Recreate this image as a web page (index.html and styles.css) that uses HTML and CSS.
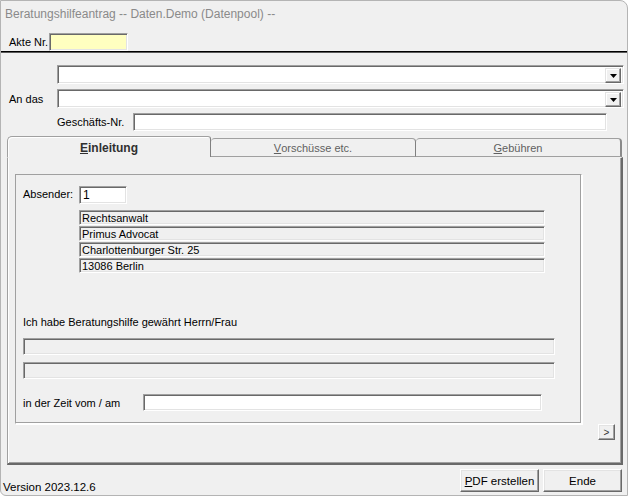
FILE: index.html
```html
<!DOCTYPE html>
<html lang="de">
<head>
  <meta charset="UTF-8">
  <title>Beratungshilfeantrag</title>
  <link rel="stylesheet" href="styles.css">
</head>
<body>

  <div class="window">
    <div class="titlebar">Beratungshilfeantrag -- Daten.Demo (Datenpool) --</div>

    <div class="akte-row">
      <span class="akte-label">Akte Nr.</span>
      <span class="field akte-field"></span>
    </div>

    <div class="address">
      <div class="addr-row">
        <span class="addr-label"></span>
        <div class="combo">
          <span class="combo-btn">
            <svg width="7" height="4" viewBox="0 0 7 4"><path d="M0 0h7L3.5 4z" fill="#000"/></svg>
          </span>
        </div>
      </div>
      <div class="addr-row">
        <span class="addr-label">An das</span>
        <div class="combo">
          <span class="combo-btn">
            <svg width="7" height="4" viewBox="0 0 7 4"><path d="M0 0h7L3.5 4z" fill="#000"/></svg>
          </span>
        </div>
      </div>
      <div class="gnr-row">
        <span class="gnr-label">Geschäfts-Nr.</span>
        <span class="field gnr-field"></span>
      </div>
    </div>

    <div class="tabs">
      <div class="tab tab-active"><u>E</u>inleitung</div>
      <div class="tab tab-mid"><u>V</u>orschüsse etc.</div>
      <div class="tab tab-last"><u>G</u>ebühren</div>
    </div>

    <div class="panel">
      <div class="group">
        <div class="sender-row">
          <span class="sender-label">Absender:</span>
          <span class="field sender-field">1</span>
        </div>
        <div class="sender-lines">
          <div class="field ro-line">Rechtsanwalt</div>
          <div class="field ro-line">Primus Advocat</div>
          <div class="field ro-line">Charlottenburger Str. 25</div>
          <div class="field ro-line">13086 Berlin</div>
        </div>

        <div class="granted">Ich habe Beratungshilfe gewährt Herrn/Frau</div>
        <div class="field off-line"></div>
        <div class="field off-line"></div>

        <div class="period-row">
          <span class="period-label">in der Zeit vom / am</span>
          <span class="field period-field"></span>
        </div>
      </div>
      <div class="next-row">
        <span class="btn small-btn">&gt;</span>
      </div>
    </div>

    <div class="bottom">
      <span class="version">Version 2023.12.6</span>
      <div class="buttons">
        <span class="btn big-btn"><u>P</u>DF erstellen</span>
        <span class="btn big-btn">Ende</span>
      </div>
    </div>
  </div>

</body>
</html>
```

FILE: styles.css
```css
body {
  margin: 0;
  background-color: #ffffff;
  font-family: "Liberation Sans", Arial, sans-serif;
  font-size: 11px;
  color: #000000;
}

.window {
  box-sizing: border-box;
  width: 628px;
  height: 496px;
  background-color: #f0f0f0;
  border: 1px solid #b4b4b4;
  border-top-right-radius: 8px;
  border-bottom-left-radius: 6px;
  overflow: hidden;
}

.titlebar {
  height: 31px;
  line-height: 27px;
  padding-left: 4px;
  font-size: 12px;
  color: #8a8a8a;
}

/* sunken 3D edit field */
.field {
  box-sizing: border-box;
  display: block;
  background-color: #ffffff;
  border: 1px solid;
  border-color: #a0a0a0 #ffffff #ffffff #a0a0a0;
  box-shadow: inset 1px 1px 0 #696969, inset -1px -1px 0 #e3e3e3;
}

/* raised 3D button */
.btn {
  box-sizing: border-box;
  display: flex;
  align-items: center;
  justify-content: center;
  background-color: #f0f0f0;
  border: 1px solid;
  border-color: #ffffff #696969 #696969 #ffffff;
  box-shadow: inset -1px -1px 0 #a0a0a0, inset 1px 1px 0 #e3e3e3;
}

.akte-row {
  display: flex;
  align-items: center;
  height: 19px;
  padding-left: 8px;
  border-bottom: 1px solid #000000;
  box-shadow: 0 1px 0 #5a5a5a;
  margin-bottom: 1px;
}

.akte-label {
  width: 40px;
}

.akte-field {
  width: 79px;
  height: 18px;
  background-color: #ffffc0;
  margin-top: 1px;
}

.address {
  padding: 12px 0 0 8px;
}

.addr-row {
  display: flex;
  align-items: center;
  margin-bottom: 5px;
}

.addr-label {
  width: 48px;
}

.combo {
  box-sizing: border-box;
  width: 567px;
  height: 19px;
  background-color: #ffffff;
  border: 1px solid;
  border-color: #a0a0a0 #ffffff #ffffff #a0a0a0;
  box-shadow: inset 1px 1px 0 #696969, inset -1px -1px 0 #e3e3e3;
  display: flex;
  justify-content: flex-end;
  padding: 2px;
}

.combo-btn {
  box-sizing: border-box;
  width: 16px;
  height: 15px;
  display: flex;
  align-items: center;
  justify-content: center;
  background-color: #f0f0f0;
  border: 1px solid;
  border-color: #e3e3e3 #696969 #696969 #e3e3e3;
  box-shadow: inset -1px -1px 0 #a0a0a0, inset 1px 1px 0 #ffffff;
}

.gnr-row {
  display: flex;
  align-items: center;
  padding-left: 48px;
}

.gnr-label {
  width: 76px;
}

.gnr-field {
  width: 474px;
  height: 18px;
}

/* tabs */
.tabs {
  display: flex;
  margin: 5px 0 0 6px;
  height: 21px;
}

.tab {
  box-sizing: border-box;
  display: flex;
  align-items: center;
  justify-content: center;
  color: #606060;
}

.tab-active {
  width: 204px;
  height: 21px;
  font-size: 12px;
  font-weight: bold;
  color: #303030;
  border-top: 1px solid #a0a0a0;
  border-left: 1px solid #a0a0a0;
  border-right: 1px solid #808080;
  border-top-left-radius: 5px;
  border-top-right-radius: 3px;
  box-shadow: inset 1px 1px 0 #ffffff;
  padding-top: 2px;
}

.tab-mid,
.tab-last {
  margin-top: 2px;
  height: 19px;
  border-top: 1px solid #a0a0a0;
  border-right: 1px solid #808080;
  border-bottom: 1px solid #a0a0a0;
  border-top-right-radius: 4px;
  border-top-left-radius: 4px;
}

.tab-mid {
  width: 205px;
}

.tab-last {
  width: 206px;
  border-right: 2px solid #8a8a8a;
}

.panel {
  box-sizing: border-box;
  margin-left: 6px;
  width: 616px;
  height: 308px;
  border: 1px solid;
  border-color: #f0f0f0 #696969 #696969 #a0a0a0;
  border-right-width: 2px;
  border-bottom-width: 2px;
  box-shadow: inset 1px 0 0 #ffffff, inset -1px -1px 0 #a0a0a0;
  padding: 16px 0 0 7px;
}

.group {
  box-sizing: border-box;
  width: 567px;
  height: 250px;
  border: 1px solid;
  border-color: #a0a0a0 #ffffff #ffffff #a0a0a0;
  box-shadow: inset -1px -1px 0 #a0a0a0, 1px 1px 0 #ffffff;
  padding: 11px 0 0 7px;
}

.sender-row {
  display: flex;
  align-items: center;
}

.sender-label {
  width: 56px;
  margin-top: -3px;
}

.sender-field {
  width: 48px;
  height: 18px;
  line-height: 17px;
  padding-left: 3px;
  font-size: 12px;
}

.sender-lines {
  margin: 6px 0 0 56px;
}

.ro-line {
  width: 466px;
  height: 15px;
  line-height: 14px;
  margin-bottom: 1px;
  padding-left: 2px;
  background-color: #f0f0f0;
}

.granted {
  margin-top: 43px;
  height: 22px;
}

.off-line {
  width: 532px;
  height: 17px;
  margin-bottom: 7px;
  background-color: #f0f0f0;
}

.period-row {
  display: flex;
  align-items: center;
  margin-top: 15px;
}

.period-label {
  width: 120px;
}

.period-field {
  width: 399px;
  height: 17px;
}

.next-row {
  display: flex;
  justify-content: flex-end;
  padding-right: 6px;
}

.small-btn {
  width: 17px;
  height: 16px;
  font-size: 10px;
  color: #333333;
}

.bottom {
  display: flex;
  justify-content: space-between;
  align-items: flex-end;
  height: 29px;
}

.version {
  padding-left: 2px;
  line-height: 14px;
  font-size: 11.5px;
}

.buttons {
  display: flex;
  gap: 4px;
  padding-right: 5px;
  margin-bottom: 2px;
}

.big-btn {
  width: 79px;
  height: 23px;
  font-size: 11.5px;
}
```
